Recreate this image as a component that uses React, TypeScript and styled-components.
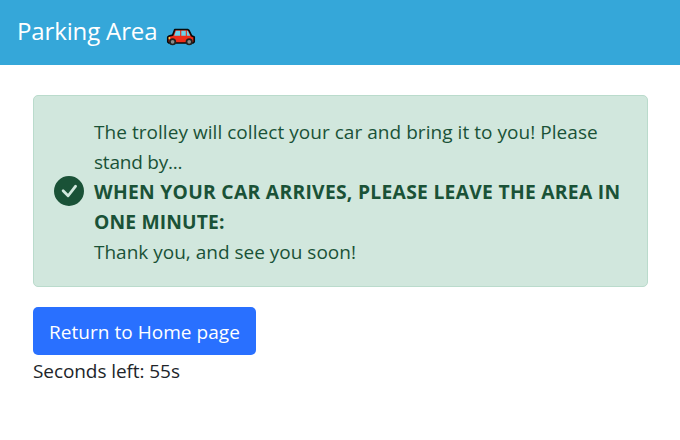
import React from "react";
import styled, { createGlobalStyle } from "styled-components";

const GlobalStyle = createGlobalStyle`
  * { box-sizing: border-box; }
  body {
    margin: 0;
    background: #fff;
    color: #212529;
    font-family: "Open Sans", "Noto Sans", sans-serif;
    font-size: 19px;
    line-height: 30px;
  }
`;

const Header = styled.header`
  display: flex;
  height: 65px;
  padding: 13px 17px 0;
  background: #35a7d9;
  color: #fff;
`;

const Title = styled.h1`
  margin: 0;
  font-size: 24px;
  font-weight: 400;
  line-height: 36px;
  letter-spacing: -0.14px;
  white-space: nowrap;
`;

const CarIcon = styled.svg`
  width: 30px;
  height: 18px;
  margin: 14.5px 0 0 9px;
`;

const Main = styled.main`
  padding: 30px 32px 0 33px;
`;

const Alert = styled.section`
  display: flex;
  align-items: center;
  gap: 10px;
  height: 192px;
  padding: 0 20px;
  margin-bottom: 20px;
  border: 1px solid #badbcc;
  border-radius: 5px;
  background: #d1e7dd;
  color: #1a5237;
`;

const CheckIcon = styled.svg`
  flex: none;
  width: 30px;
  height: 30px;
`;

const Message = styled.div`
  padding-top: 1px;
`;

const Line = styled.div<{ $spacing: number; $strong?: boolean }>`
  white-space: nowrap;
  width: max-content;
  letter-spacing: ${(p) => p.$spacing}px;
  font-size: ${(p) => (p.$strong ? 19.3 : 19)}px;
  font-weight: ${(p) => (p.$strong ? 700 : 400)};
`;

const HomeButton = styled.button`
  display: block;
  width: 223px;
  height: 48px;
  padding: 2px 0 0 16px;
  border: 0;
  border-radius: 5px;
  background: #2970ff;
  color: #fff;
  font: inherit;
  letter-spacing: 0.04px;
  text-align: left;
  white-space: nowrap;
`;

const Countdown = styled.div`
  padding-top: 1px;
  letter-spacing: -0.08px;
`;

export default function App() {
  return (
    <>
      <GlobalStyle />
      <Header>
        <Title>Parking Area</Title>
        <CarIcon viewBox="0 0 30 18" aria-label="car">
          <path d="M8.8 1.5H21.5L23 2.5 25.6 7.8 28.2 9V13.8L27 15H2.8L1.8 14V9.2L3 8 6.6 7.2Z" fill="#ee2c18" stroke="#090909" strokeWidth="1.7" strokeLinejoin="round" />
          <path d="M9.9 2.8H14.1V7.8H8.2ZM15.3 2.8H19.8V7.8H15.3Z" fill="#6cd2ea" />
          <path d="M20.9 2.8H21.8L24.2 7.8H20.9Z" fill="#6cd2ea" />
          <path d="M2.6 9H4.2V11.2H2.6Z" fill="#ffc83d" />
          <circle cx="6.6" cy="13.8" r="2.7" fill="#8a8a8a" stroke="#222" strokeWidth="1.7" />
          <circle cx="23.2" cy="13.8" r="2.7" fill="#8a8a8a" stroke="#222" strokeWidth="1.7" />
        </CarIcon>
      </Header>
      <Main>
        <Alert>
          <CheckIcon viewBox="0 0 16 16" fill="#1a5237">
            <path d="M16 8A8 8 0 1 1 0 8a8 8 0 0 1 16 0zm-3.97-3.03a.75.75 0 0 0-1.08.022L7.477 9.417 5.384 7.323a.75.75 0 0 0-1.06 1.06L6.97 11.03a.75.75 0 0 0 1.079-.02l3.992-4.99a.75.75 0 0 0-.01-1.05z" />
          </CheckIcon>
          <Message>
            <Line $spacing={0.045}>The trolley will collect your car and bring it to you! Please</Line>
            <Line $spacing={-0.22}>stand by...</Line>
            <Line $spacing={0.28} $strong>WHEN YOUR CAR ARRIVES, PLEASE LEAVE THE AREA IN</Line>
            <Line $spacing={0.14} $strong>ONE MINUTE:</Line>
            <Line $spacing={0}>Thank you, and see you soon!</Line>
          </Message>
        </Alert>
        <HomeButton>Return to Home page</HomeButton>
        <Countdown>Seconds left: 55s</Countdown>
      </Main>
    </>
  );
}
